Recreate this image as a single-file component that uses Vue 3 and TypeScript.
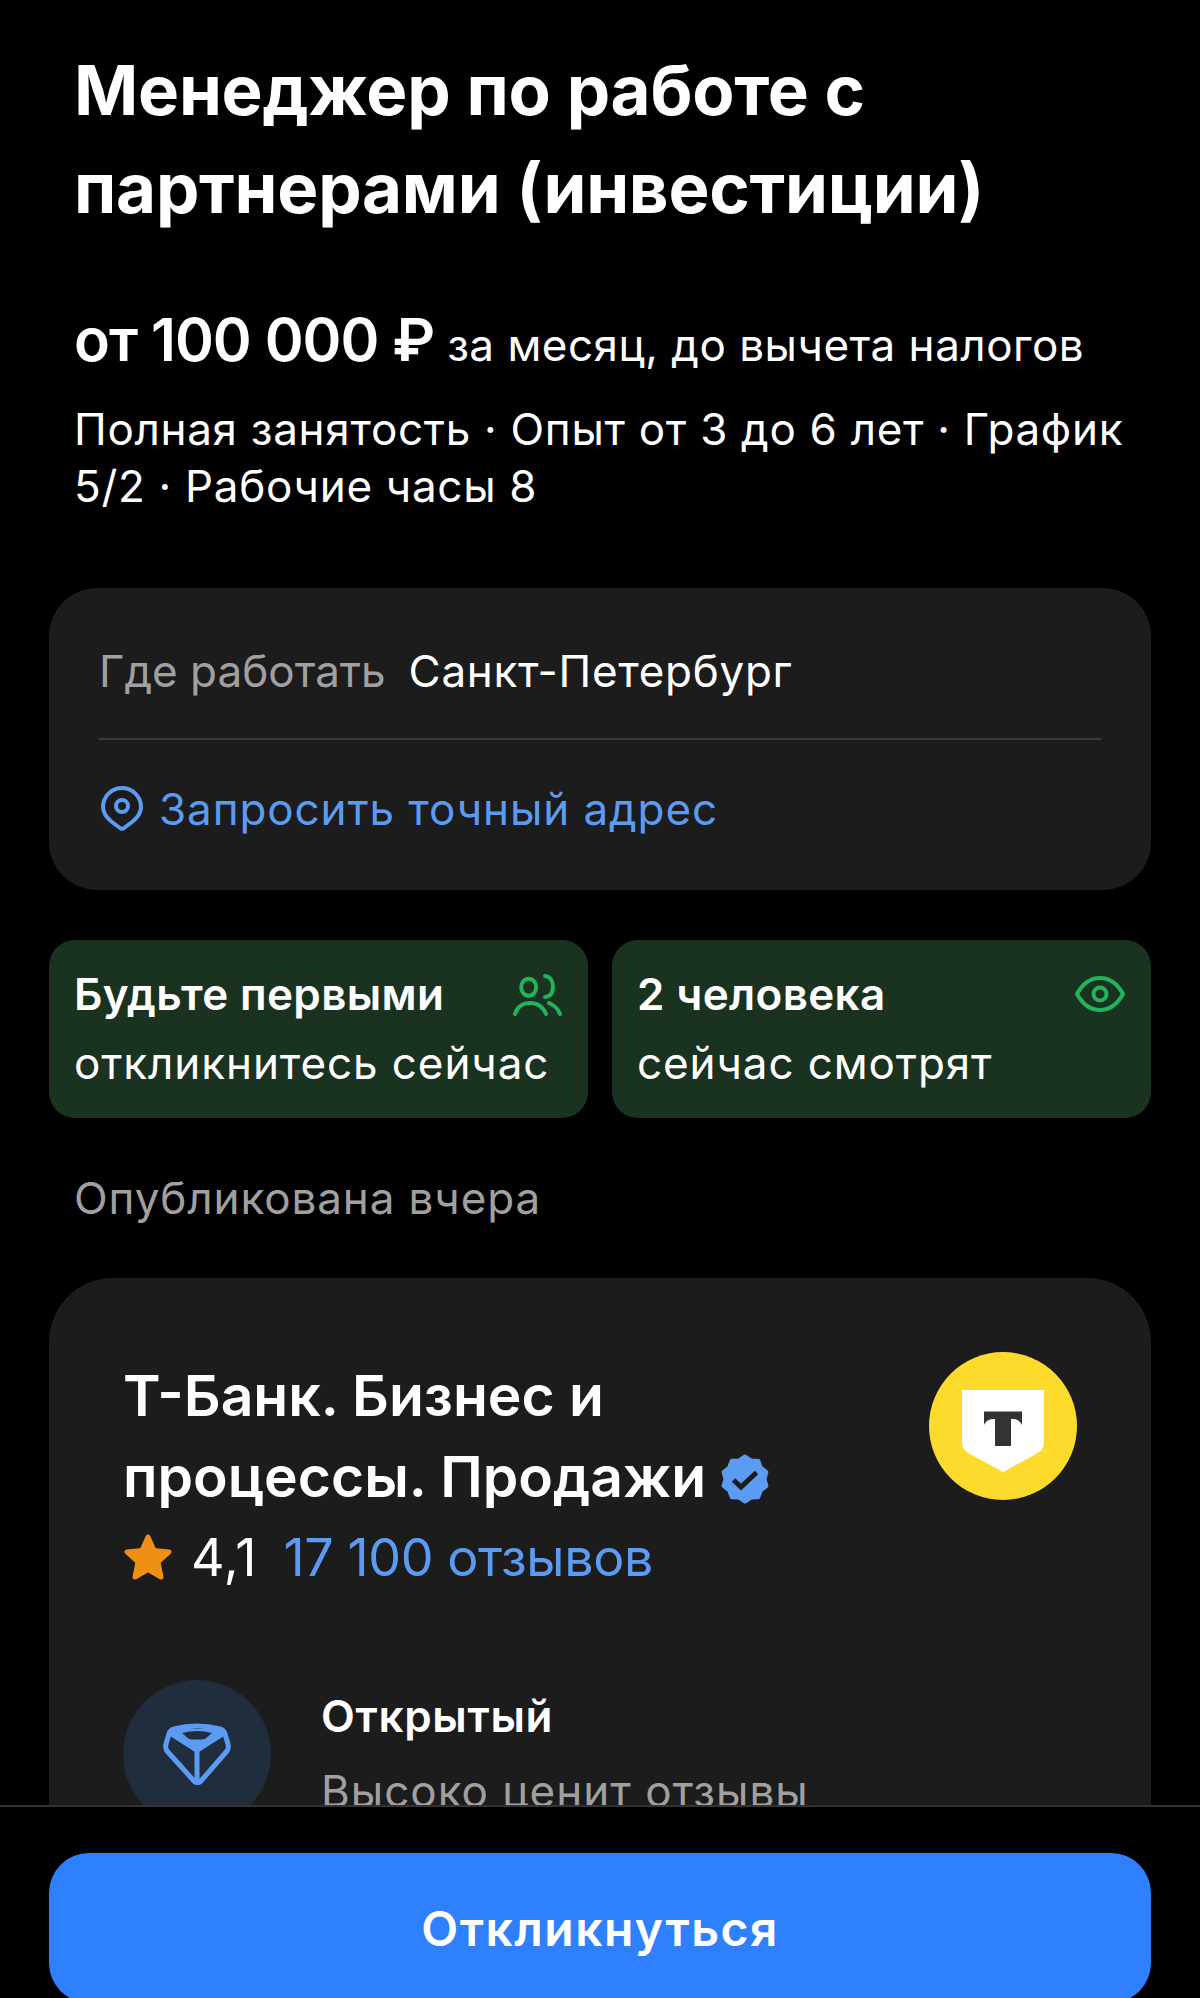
<script setup lang="ts">
interface Hint {
  title: string
  text: string
  icon: 'people' | 'eye'
}

const metaLines = ['Полная занятость · Опыт от 3 до 6 лет · График', '5/2 · Рабочие часы 8']

const hints: Hint[] = [
  { title: 'Будьте первыми', text: 'откликнитесь сейчас', icon: 'people' },
  { title: '2 человека', text: 'сейчас смотрят', icon: 'eye' }
]

// scalloped edge of the "verified" badge
const badgePoints = Array.from({ length: 20 }, (_, i) => {
  const radius = i % 2 === 0 ? 22.5 : 19.5
  const angle = (i * Math.PI) / 10 - Math.PI / 2
  return `${(25 + radius * Math.cos(angle)).toFixed(1)},${(25 + radius * Math.sin(angle)).toFixed(1)}`
}).join(' ')
</script>

<template>
  <div class="screen">
    <div class="content">
      <h1 class="title">Менеджер по работе с<br>партнерами (инвестиции)</h1>
      <div class="salary"><b>от 100 000 ₽</b> <span>за месяц, до вычета налогов</span></div>
      <div class="meta">
        <div v-for="line in metaLines" :key="line">{{ line }}</div>
      </div>

      <section class="place">
        <div class="place-row"><span class="muted">Где работать</span><span class="city">Санкт-Петербург</span></div>
        <div class="place-link">
          <svg width="42" height="46" viewBox="0 0 42 46" fill="none" stroke="#5b9bf2" stroke-width="4">
            <path d="M21 2C31 2 40 10 40 21 40 28 36 32 31 36L23 42Q21 43.500 19 42L11 36C6 32 2 28 2 21 2 10 11 2 21 2z" />
            <circle cx="21" cy="20" r="6" />
          </svg>
          <span>Запросить точный адрес</span>
        </div>
      </section>

      <div class="hints">
        <div v-for="hint in hints" :key="hint.title" class="hint">
          <div class="hint-top">
            <b>{{ hint.title }}</b>
            <svg v-if="hint.icon === 'people'" width="50" height="44" viewBox="0 0 50 44" fill="none" stroke="#22b35e" stroke-width="4" stroke-linecap="round">
              <ellipse cx="16.700" cy="15.300" rx="7.500" ry="8.500" />
              <path d="M33 4c5 .5 8 5 8 11s-3 9.500-8 10" />
              <path d="M3 42c2-7 8-11 15-11s13 4 16 11" />
              <path d="M37 31c5 2 9 6 11 11" />
            </svg>
            <svg v-else width="50" height="36" viewBox="0 0 50 36" fill="none" stroke="#22b35e" stroke-width="4">
              <path d="M2 18C8 7 15 2 25 2s17 5 23 16c-6 11-13 16-23 16S8 29 2 18z" />
              <circle cx="25" cy="18" r="6.500" />
            </svg>
          </div>
          <div class="hint-text">{{ hint.text }}</div>
        </div>
      </div>

      <div class="published">Опубликована вчера</div>

      <section class="company">
        <div class="company-head">
          <div class="company-info">
            <h2 class="company-name">
              Т-Банк. Бизнес и<br>процессы. Продажи
              <svg class="verified" width="50" height="50" viewBox="0 0 50 50">
                <polygon :points="badgePoints" fill="#5b9bf2" stroke="#5b9bf2" stroke-width="4" stroke-linejoin="round" />
                <path fill="none" stroke="#1c1c1c" stroke-width="5" d="M13.500 26l7.500 7L36.500 18.500" />
              </svg>
            </h2>
            <div class="rating">
              <svg width="50" height="48" viewBox="0 0 50 48">
                <path fill="#ef8f14" stroke="#ef8f14" stroke-width="5" stroke-linejoin="round" d="M25 4l6 13.500 15 1.500-11 10 3 15-13-7.500L12 44l3-15L4 19l15-1.500z" />
              </svg>
              <span class="score">4,1</span>
              <span class="reviews">17 100 отзывов</span>
            </div>
          </div>
          <div class="logo">
            <svg width="82" height="82" viewBox="0 0 82 82">
              <path fill="#fff" d="M0 0h82v52c0 6-3 9-8 12L41 82 8 64c-5-3-8-6-8-12z" />
              <path fill="#333" d="M22 21.500h38v13.500c-2-4-5-6-10-6h-1v27H33V29h-1c-5 0-8 2-10 6z" />
            </svg>
          </div>
        </div>

        <div class="trait">
          <div class="trait-icon">
            <svg width="68" height="62" viewBox="0 0 68 62" fill="none">
              <path fill="#5b9bf2" d="M11 6L57 6 61 13 36 29H32L7 13z" />
              <path fill="#202d3d" d="M19 10Q34 6 49 10L42 16Q34 17 26 16z" />
              <path stroke="#5b9bf2" stroke-width="5" stroke-linejoin="round" d="M11 6Q34 0 57 6 61 7 62 11L65 21Q66 25 64 28L38 58Q34.500 61 31 58L4 28Q2 25 3 21L6 11Q7 7 11 6zM34 29V58" />
            </svg>
          </div>
          <div class="trait-text">
            <div class="trait-name">Открытый</div>
            <div class="trait-desc">Высоко ценит отзывы</div>
          </div>
        </div>
      </section>
    </div>

    <div class="bottom-bar">
      <button class="respond" type="button">Откликнуться</button>
    </div>
  </div>
</template>

<style>
html,
body {
  margin: 0;
  background: #000;
}
</style>

<style scoped>
.screen {
  height: 1998px;
  overflow: hidden;
  display: flex;
  flex-direction: column;
  background: #000;
  color: #fff;
  font-family: Inter, "Liberation Sans", sans-serif;
}

.content {
  flex: 1;
  min-height: 0;
  overflow: hidden;
  padding: 41px 49px 0;
}

.title {
  margin: 0 0 0 25px;
  font-size: 69px;
  line-height: 98px;
  font-weight: 700;
  letter-spacing: -0.25px;
}

.salary {
  margin: 68px 0 0 25px;
  line-height: 70px;
  font-size: 44px;
  letter-spacing: 0.5px;
}

.salary b {
  font-size: 59px;
  font-weight: 600;
  letter-spacing: -1px;
}

.meta {
  margin: 21px 0 0 25px;
  font-size: 44px;
  line-height: 57px;
  letter-spacing: 0.7px;
}

.place {
  margin-top: 73px;
  height: 302px;
  box-sizing: border-box;
  padding: 0 50px;
  background: #1c1c1c;
  border-radius: 48px;
  font-size: 44px;
}

.place-row {
  height: 152px;
  box-sizing: border-box;
  padding-top: 16px;
  display: flex;
  align-items: center;
  gap: 23px;
  border-bottom: 2px solid #3a3a3a;
}

.muted {
  color: #a0a0a0;
}

.city {
  letter-spacing: 0.7px;
}

.place-link {
  height: 150px;
  box-sizing: border-box;
  padding-bottom: 12px;
  display: flex;
  align-items: center;
  gap: 16px;
  color: #5b9bf2;
  letter-spacing: 0.9px;
}

.place-link svg {
  margin-left: 2px;
}

.hints {
  margin-top: 50px;
  display: grid;
  grid-template-columns: 1fr 1fr;
  gap: 24px;
}

.hint {
  height: 178px;
  box-sizing: border-box;
  padding: 28px 26px 0 25px;
  background: #1a3320;
  border-radius: 26px;
  font-size: 44px;
}

.hint-top {
  display: flex;
  justify-content: space-between;
  align-items: center;
  height: 52px;
}

.hint-top b {
  font-weight: 600;
  letter-spacing: 0.35px;
}

.hint-text {
  margin-top: 17px;
  line-height: 52px;
  letter-spacing: 0.9px;
}

.published {
  margin: 40px 0 0 25px;
  font-size: 44px;
  line-height: 80px;
  color: #a0a0a0;
  letter-spacing: 0.9px;
}

.company {
  margin-top: 40px;
  height: 700px;
  box-sizing: border-box;
  padding: 74px 74px 0;
  background: #1c1c1c;
  border-radius: 64px;
}

.company-head {
  display: flex;
  justify-content: space-between;
}

.company-info {
  padding-top: 3px;
}

.company-name {
  margin: 0;
  font-size: 57px;
  line-height: 81px;
  font-weight: 600;
}

.verified {
  vertical-align: -7px;
}

.rating {
  display: flex;
  align-items: center;
  gap: 18px;
  height: 80px;
  font-size: 52px;
}

.score {
  letter-spacing: 1px;
}

.reviews {
  color: #5b9bf2;
  margin-left: 8px;
  letter-spacing: -0.4px;
}

.logo {
  width: 148px;
  height: 148px;
  border-radius: 50%;
  background: #fddb2d;
  display: flex;
  align-items: center;
  justify-content: center;
}

.logo svg {
  margin-top: 10px;
}

.trait {
  margin-top: 83px;
  display: flex;
  gap: 50px;
}

.trait-icon {
  width: 148px;
  height: 148px;
  border-radius: 50%;
  background: #202d3d;
  display: flex;
  align-items: center;
  justify-content: center;
  flex: none;
}

.trait-name {
  font-size: 44px;
  font-weight: 600;
  line-height: 72px;
  letter-spacing: 0.7px;
}

.trait-desc {
  margin-top: 9px;
  font-size: 44px;
  line-height: 60px;
  color: #a0a0a0;
  letter-spacing: 1px;
}

.bottom-bar {
  height: 193px;
  flex: none;
  box-sizing: border-box;
  padding: 46px 49px 0;
  border-top: 2px solid #333;
  background: #000;
}

.respond {
  display: block;
  width: 100%;
  height: 150px;
  border: 0;
  border-radius: 40px;
  background: #2f80ff;
  color: #fff;
  font: 600 48px Inter, "Liberation Sans", sans-serif;
  letter-spacing: 1.5px;
}
</style>
